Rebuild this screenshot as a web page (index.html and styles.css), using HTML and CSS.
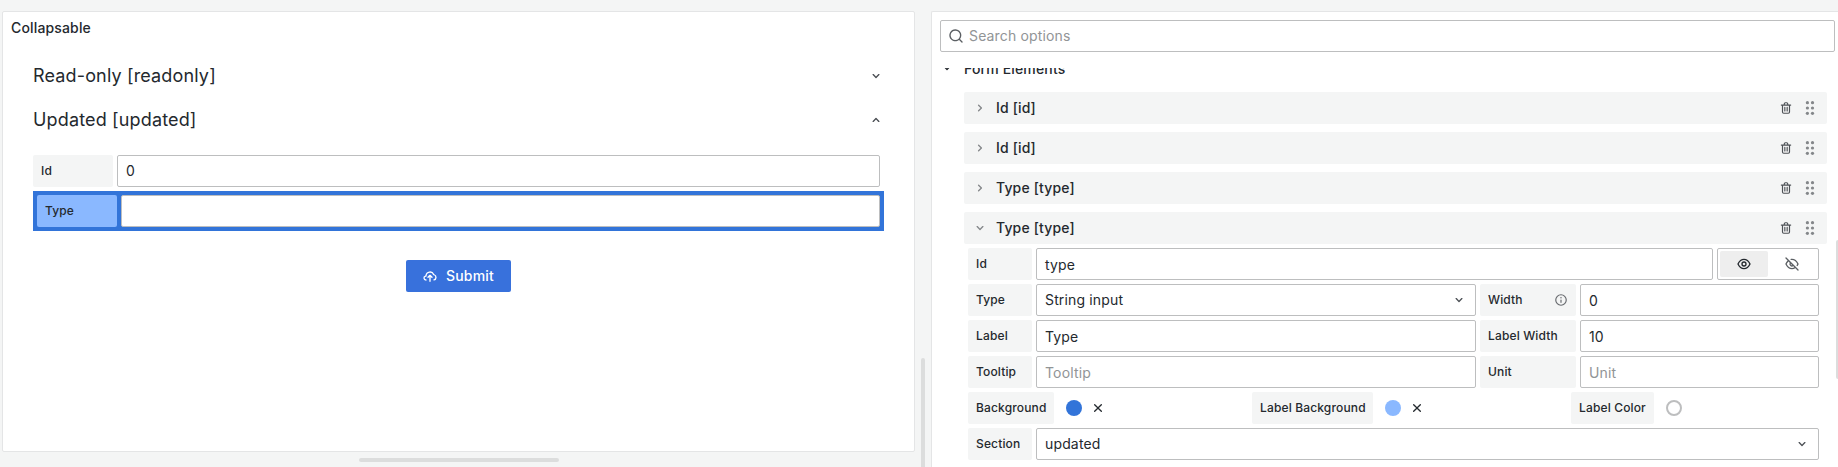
FILE: index.html
```
<!DOCTYPE html>
<html lang="en">
<head>
<meta charset="utf-8">
<title>Collapsable</title>
<link rel="stylesheet" href="styles.css">
</head>
<body>
<svg class="sprite" aria-hidden="true">
  <symbol id="search" viewBox="0 0 24 24"><path d="M21.71,20.29,18,16.61A9,9,0,1,0,16.61,18l3.68,3.68a1,1,0,0,0,1.42,0A1,1,0,0,0,21.71,20.29ZM11,18a7,7,0,1,1,7-7A7,7,0,0,1,11,18Z"/></symbol>
  <symbol id="down" viewBox="0 0 24 24"><path d="M17,9.17a1,1,0,0,0-1.41,0L12,12.71,8.46,9.17a1,1,0,0,0-1.41,0,1,1,0,0,0,0,1.42l4.24,4.24a1,1,0,0,0,1.42,0L17,10.59A1,1,0,0,0,17,9.17Z"/></symbol>
  <symbol id="up" viewBox="0 0 24 24"><path d="M17,13.41,12.71,9.17a1,1,0,0,0-1.42,0L7.05,13.41a1,1,0,0,0,0,1.42,1,1,0,0,0,1.41,0L12,11.29l3.54,3.54a1,1,0,0,0,.7.29,1,1,0,0,0,.71-.29A1,1,0,0,0,17,13.41Z"/></symbol>
  <symbol id="right" viewBox="0 0 24 24"><path d="M14.83,11.29,10.59,7.05a1,1,0,0,0-1.42,0,1,1,0,0,0,0,1.41L12.71,12,9.17,15.54a1,1,0,0,0,0,1.41,1,1,0,0,0,.71.29,1,1,0,0,0,.71-.29l4.24-4.24A1,1,0,0,0,14.83,11.29Z"/></symbol>
  <symbol id="trash" viewBox="0 0 24 24"><path d="M10,18a1,1,0,0,0,1-1V11a1,1,0,0,0-2,0v6A1,1,0,0,0,10,18ZM20,6H16V5a3,3,0,0,0-3-3H11A3,3,0,0,0,8,5V6H4A1,1,0,0,0,4,8H5V19a3,3,0,0,0,3,3h8a3,3,0,0,0,3-3V8h1a1,1,0,0,0,0-2ZM10,5a1,1,0,0,1,1-1h2a1,1,0,0,1,1,1V6H10Zm7,14a1,1,0,0,1-1,1H8a1,1,0,0,1-1-1V8H17Zm-3-1a1,1,0,0,0,1-1V11a1,1,0,0,0-2,0v6A1,1,0,0,0,14,18Z"/></symbol>
  <symbol id="dots" viewBox="0 0 16 16"><circle cx="5.4" cy="2.7" r="1.6"/><circle cx="10.5" cy="2.7" r="1.6"/><circle cx="5.4" cy="8" r="1.6"/><circle cx="10.5" cy="8" r="1.6"/><circle cx="5.4" cy="13.3" r="1.6"/><circle cx="10.5" cy="13.3" r="1.6"/></symbol>
  <symbol id="eye" viewBox="0 0 24 24"><path d="M21.92,11.6C19.9,6.91,16.1,4,12,4S4.1,6.91,2.08,11.6a1,1,0,0,0,0,.8C4.1,17.09,7.9,20,12,20s7.9-2.91,9.92-7.6A1,1,0,0,0,21.92,11.6ZM12,18c-3.17,0-6.17-2.29-7.9-6C5.83,8.29,8.83,6,12,6s6.17,2.29,7.9,6C18.17,15.71,15.17,18,12,18ZM12,8a4,4,0,1,0,4,4A4,4,0,0,0,12,8Zm0,6a2,2,0,1,1,2-2A2,2,0,0,1,12,14Z"/></symbol>
  <symbol id="eye-slash" viewBox="0 0 24 24"><path d="M10.94,6.08A6.93,6.93,0,0,1,12,6c3.18,0,6.17,2.29,7.91,6a15.23,15.23,0,0,1-.9,1.64,1,1,0,0,0-.16.55,1,1,0,0,0,1.86.5,15.77,15.77,0,0,0,1.21-2.3,1,1,0,0,0,0-.79C19.9,6.91,16.1,4,12,4a7.77,7.77,0,0,0-1.4.12,1,1,0,1,0,.34,2ZM3.71,2.29A1,1,0,0,0,2.29,3.71L5.39,6.8a14.62,14.62,0,0,0-3.31,4.8,1,1,0,0,0,0,.8C4.1,17.09,7.9,20,12,20a9.26,9.26,0,0,0,5.05-1.54l3.24,3.25a1,1,0,0,0,1.42,0,1,1,0,0,0,0-1.42Zm6.36,9.19,2.45,2.45A1.81,1.81,0,0,1,12,14a2,2,0,0,1-2-2A1.81,1.81,0,0,1,10.07,11.48ZM12,18c-3.18,0-6.17-2.29-7.9-6A12.09,12.09,0,0,1,6.8,8.21L8.57,10A4,4,0,0,0,14,15.43L15.59,17A7.24,7.24,0,0,1,12,18Z"/></symbol>
  <symbol id="info" viewBox="0 0 24 24"><path d="M12,2A10,10,0,1,0,22,12,10,10,0,0,0,12,2Zm0,18a8,8,0,1,1,8-8A8,8,0,0,1,12,20Zm0-9a1,1,0,0,0-1,1v4a1,1,0,0,0,2,0V12A1,1,0,0,0,12,11Zm0-4a1.25,1.25,0,1,0,1.25,1.25A1.25,1.25,0,0,0,12,7Z"/></symbol>
  <symbol id="upload" viewBox="0 0 24 24"><path d="M18.42,9.21a7,7,0,0,0-13.36,1.9A4,4,0,0,0,6,19a1,1,0,0,0,0-2,2,2,0,0,1,0-4,1,1,0,0,0,1-1,5,5,0,0,1,9.73-1.61,1,1,0,0,0,.78.66,3,3,0,0,1,.24,5.84,1,1,0,1,0,.5,1.94,5,5,0,0,0,.17-9.62ZM12.71,10.29a1,1,0,0,0-.33-.21,1,1,0,0,0-.76,0,1,1,0,0,0-.33.21l-3,3a1,1,0,0,0,1.42,1.42L11,13.41V20a1,1,0,0,0,2,0V13.41l1.29,1.3a1,1,0,0,0,1.42-1.42Z"/></symbol>
  <symbol id="times" viewBox="0 0 24 24"><path d="M13.41,12l4.3-4.29a1,1,0,1,0-1.42-1.42L12,10.59,7.71,6.29A1,1,0,0,0,6.29,7.71L10.59,12l-4.3,4.29a1,1,0,0,0,0,1.42,1,1,0,0,0,1.42,0L12,13.41l4.29,4.3a1,1,0,0,0,1.42,0,1,1,0,0,0,0-1.42Z"/></symbol>
</svg>
<div class="app">
  <div class="preview">
    <section class="panel">
      <h2 class="panel-title">Collapsable</h2>
      <div class="form">
        <div class="section-head"><span>Read-only [readonly]</span><svg class="icon"><use href="#down"/></svg></div>
        <div class="section-head"><span>Updated [updated]</span><svg class="icon"><use href="#up"/></svg></div>
        <div class="field field-plain"><div class="label">Id</div><div class="input">0</div></div>
        <div class="field field-marked"><div class="label">Type</div><div class="input"></div></div>
        <button class="submit"><svg class="icon"><use href="#upload"/></svg><span>Submit</span></button>
      </div>
    </section>
    <div class="scroll-x"></div>
  </div>
  <div class="gutter"><div class="scroll-y"></div></div>
  <aside class="options">
    <div class="search"><svg class="icon"><use href="#search"/></svg><span>Search options</span></div>
    <div class="scroller">
      <div class="category"><svg class="icon"><use href="#down"/></svg><span>Form Elements</span></div>
      <div class="elements">
        <div class="element"><svg class="icon caret"><use href="#right"/></svg><span class="name">Id [id]</span><svg class="icon trash"><use href="#trash"/></svg><svg class="icon dots"><use href="#dots"/></svg></div>
        <div class="element"><svg class="icon caret"><use href="#right"/></svg><span class="name">Id [id]</span><svg class="icon trash"><use href="#trash"/></svg><svg class="icon dots"><use href="#dots"/></svg></div>
        <div class="element"><svg class="icon caret"><use href="#right"/></svg><span class="name">Type [type]</span><svg class="icon trash"><use href="#trash"/></svg><svg class="icon dots"><use href="#dots"/></svg></div>
        <div class="element"><svg class="icon caret"><use href="#down"/></svg><span class="name">Type [type]</span><svg class="icon trash"><use href="#trash"/></svg><svg class="icon dots"><use href="#dots"/></svg></div>
      </div>
      <div class="editor">
        <div class="row">
          <div class="label">Id</div><div class="input text">type</div>
          <div class="radio"><span class="choice chosen"><svg class="icon"><use href="#eye"/></svg></span><span class="choice"><svg class="icon"><use href="#eye-slash"/></svg></span></div>
        </div>
        <div class="row">
          <div class="label">Type</div><div class="input select"><span>String input</span><svg class="icon"><use href="#down"/></svg></div>
          <div class="label wide"><span>Width</span><svg class="icon info"><use href="#info"/></svg></div><div class="input text short">0</div>
        </div>
        <div class="row">
          <div class="label">Label</div><div class="input text">Type</div>
          <div class="label wide">Label Width</div><div class="input text short">10</div>
        </div>
        <div class="row">
          <div class="label">Tooltip</div><div class="input text empty">Tooltip</div>
          <div class="label wide">Unit</div><div class="input text short empty">Unit</div>
        </div>
        <div class="colors">
          <div class="color"><div class="label fit-background">Background</div><span class="swatch blue"></span><svg class="icon"><use href="#times"/></svg></div>
          <div class="color"><div class="label fit-label-background">Label Background</div><span class="swatch light"></span><svg class="icon"><use href="#times"/></svg></div>
          <div class="color"><div class="label fit-label-color">Label Color</div><span class="swatch unset"></span></div>
        </div>
        <div class="row">
          <div class="label">Section</div><div class="input select"><span>updated</span><svg class="icon"><use href="#down"/></svg></div>
        </div>
      </div>
    </div>
    <div class="options-thumb"></div>
  </aside>
</div>
</body>
</html>
```
FILE: styles.css
```
* { box-sizing: border-box; }

body {
  margin: 0;
  height: 467px;
  overflow: hidden;
  background: #f4f5f5;
  color: #24292e;
  font: 400 14px/22px Inter, "Liberation Sans", sans-serif;
  letter-spacing: 0.15px;
}

.sprite { display: none; }

.icon {
  width: 16px;
  height: 16px;
  flex: none;
  fill: currentColor;
}

.app {
  display: flex;
  height: 467px;
  padding: 11px 0 0 2px;
}

.preview { width: 913px; }

.panel {
  height: 441px;
  border: 1px solid #e4e5e6;
  border-radius: 2px;
  background: #fff;
}

.panel-title {
  margin: 0;
  padding: 5px 8px;
  font-size: 14px;
  font-weight: 500;
  line-height: 22px;
}

.form {
  display: flex;
  flex-direction: column;
  padding: 10px 30px 0 30px;
}

.section-head {
  display: flex;
  align-items: center;
  justify-content: space-between;
  height: 44px;
  font-size: 18px;
  letter-spacing: 0.15px;
}

.section-head .icon { color: #4a4e53; }

.field { display: flex; gap: 4px; }

.field-plain { margin: 13px 4px 4px 0; }

.field-marked {
  padding: 4px;
  background: #3274d9;
}

.label {
  display: flex;
  align-items: center;
  justify-content: space-between;
  flex: none;
  width: 64px;
  height: 32px;
  padding: 0 8px 1px;
  border-radius: 2px;
  background: #f4f5f5;
  font-size: 12px;
  font-weight: 500;
  line-height: 16px;
  white-space: nowrap;
}

.field .label { width: 80px; }

.field-marked .label { background: #8ab8ff; }

.input {
  display: flex;
  align-items: center;
  flex: 1;
  height: 32px;
  padding: 0 8px;
  border: 1px solid #bdbebf;
  border-radius: 2px;
  background: #fff;
}

.submit {
  display: flex;
  align-items: center;
  align-self: flex-start;
  gap: 8px;
  width: 105px;
  height: 32px;
  margin: 29px 0 0 373px;
  padding: 0 16px;
  border: 0;
  border-radius: 2px;
  background: #3871dc;
  color: #fff;
  font: inherit;
  font-weight: 500;
  letter-spacing: 0.2px;
}

.scroll-x {
  width: 200px;
  height: 4px;
  margin: 6px 0 0 357px;
  border-radius: 2px;
  background: #dcdddd;
}

.gutter { width: 16px; padding: 347px 0 0 6px; }

.scroll-y {
  width: 4px;
  height: 109px;
  border-radius: 2px 2px 0 0;
  background: #dcdddd;
}

.options {
  position: relative;
  flex: 1;
  height: 456px;
  border: solid #e4e5e6;
  border-width: 1px 0 0 1px;
  border-radius: 2px 0 0 0;
  background: #fff;
}

.search {
  display: flex;
  align-items: center;
  gap: 5px;
  height: 32px;
  margin: 8px 3px 0 8px;
  padding: 0 7px;
  border: 1px solid #bdbebf;
  border-radius: 2px;
  color: #919496;
}

.search .icon { color: #5b5f63; }

.scroller {
  height: 399px;
  margin-top: 16px;
  overflow: hidden;
}

.category {
  display: flex;
  align-items: center;
  gap: 9px;
  height: 22px;
  margin-top: -10px;
  padding-left: 7px;
  font-weight: 500;
}

.category .icon { margin-bottom: 3px; }

.elements {
  display: flex;
  flex-direction: column;
  gap: 8px;
  padding: 12px 11px 0 32px;
}

.element {
  display: flex;
  align-items: center;
  height: 32px;
  padding: 0 9px 0 8px;
  border-radius: 2px;
  background: #f4f5f5;
}

.caret { color: #84878a; }

.name {
  flex: 1;
  margin-left: 8px;
  font-weight: 500;
}

.trash {
  width: 14px;
  height: 14px;
  margin-right: 9px;
  color: #4d5156;
}

.dots { color: #84878a; }

.editor {
  display: flex;
  flex-direction: column;
  gap: 4px;
  padding: 4px 19px 0 36px;
}

.row { display: flex; gap: 4px; }

.wide { width: 96px; }

.info { width: 14px; height: 14px; color: #66696d; }

.text { padding-top: 2px; }

.short { flex: none; width: 239px; }

.empty { color: #919496; }

.select { justify-content: space-between; }

.select .icon { color: #4d5156; }

.radio {
  display: flex;
  width: 102px;
  height: 32px;
  padding: 2px;
  border: 1px solid #bdbebf;
  border-radius: 2px;
}

.choice {
  display: flex;
  align-items: center;
  justify-content: center;
  width: 48px;
  border-radius: 2px;
  color: #5b5f63;
}

.chosen { background: #eee; color: #24292e; }

.colors {
  display: grid;
  grid-template-columns: 284px 319px auto;
}

.color { display: flex; align-items: center; }

.fit-background { width: 86px; }
.fit-label-background { width: 121px; }
.fit-label-color { width: 83px; }

.swatch {
  width: 16px;
  height: 16px;
  margin: 0 8px 0 12px;
  border-radius: 50%;
}

.blue { background: #3274d9; }
.light { background: #8ab8ff; }
.unset { border: 2px solid #bdbebf; }

.options-thumb {
  position: absolute;
  top: 228px;
  right: 0;
  width: 2px;
  height: 139px;
  border-radius: 2px 0 0 2px;
  background: #dcdddd;
}
```
